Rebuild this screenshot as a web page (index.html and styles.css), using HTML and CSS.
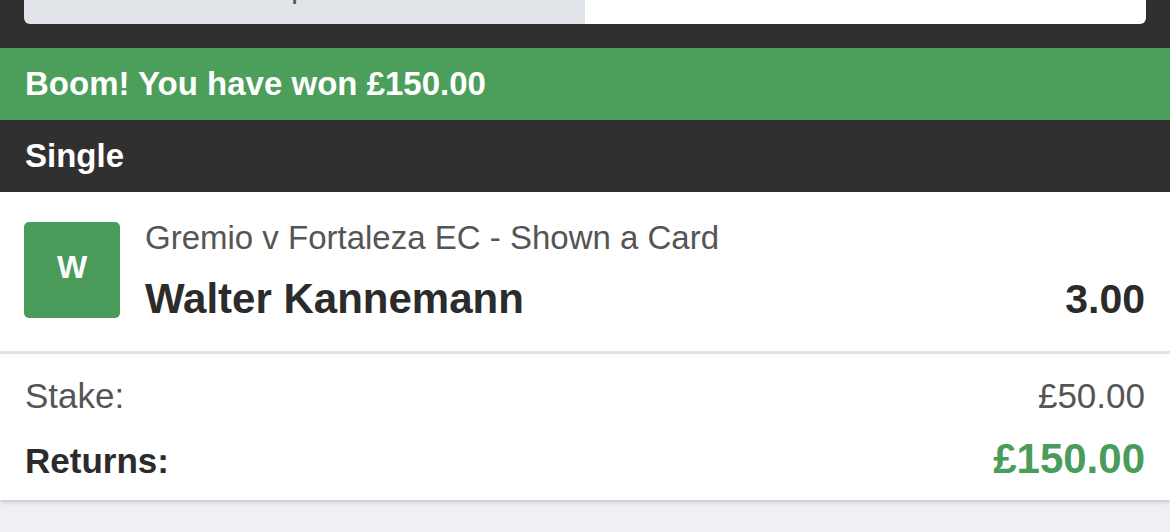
FILE: index.html
```html
<!DOCTYPE html>
<html lang="en">
<head>
<meta charset="utf-8">
<title>Bet Receipt</title>
<link rel="stylesheet" href="styles.css">
</head>
<body>
  <header class="top">
    <div class="segmented">
      <div class="seg seg-off"><span class="seg-label">Open</span></div>
      <div class="seg seg-on"><span class="seg-label">Settled</span></div>
    </div>
  </header>
  <div class="banner">Boom! You have won £150.00</div>
  <div class="bet-type">Single</div>
  <section class="card">
    <div class="selection">
      <div class="result-badge">W</div>
      <div class="sel-info">
        <div class="event">Gremio v Fortaleza EC - Shown a Card</div>
        <div class="sel-row">
          <span class="runner">Walter Kannemann</span>
          <span class="odds">3.00</span>
        </div>
      </div>
    </div>
    <div class="summary">
      <div class="sum-row">
        <span class="stake-label">Stake:</span>
        <span class="stake-value">£50.00</span>
      </div>
      <div class="sum-row">
        <span class="returns-label">Returns:</span>
        <span class="returns-value">£150.00</span>
      </div>
    </div>
  </section>
  <div class="footer-note">Bet placed 12 Aug 2019 · Receipt O/1234567</div>
</body>
</html>
```
FILE: styles.css
```css
* { box-sizing: border-box; }
html, body { margin: 0; padding: 0; }
body {
  background: #eff0f4;
  font-family: "Liberation Sans", Arial, sans-serif;
  color: #2b2b2b;
  overflow: hidden;
}
.top {
  background: #303030;
  height: 48px;
  padding: 0 24px;
}
.segmented {
  display: grid;
  grid-template-columns: 561px 1fr;
  height: 24px;
  border-radius: 0 0 6px 6px;
  overflow: hidden;
}
.seg {
  text-align: center;
  font-size: 30px;
  line-height: 30px;
  color: #555;
}
.seg-label { display: block; margin-top: -27px; }
.seg-off { background: #e0e3e7; }
.seg-on { background: #ffffff; }

.banner {
  background: #4c9e5b;
  color: #fff;
  height: 72px;
  padding: 0 25px;
  display: flex;
  align-items: center;
  font-weight: bold;
  font-size: 33px;
}
.bet-type {
  background: #303030;
  color: #fff;
  height: 72px;
  padding: 0 25px;
  display: flex;
  align-items: center;
  font-weight: bold;
  font-size: 33px;
}
.card {
  background: #fff;
  box-shadow: 0 2px 4px rgba(0,0,0,0.18);
}
.selection {
  display: flex;
  align-items: flex-start;
  gap: 25px;
  padding: 30px 25px 33px 24px;
  border-bottom: 3px solid #e3e3e6;
  height: 162px;
}
.result-badge {
  width: 96px;
  height: 96px;
  flex: 0 0 96px;
  background: #4a9b5a;
  border-radius: 5px;
  color: #fff;
  font-weight: bold;
  font-size: 32px;
  display: flex;
  align-items: center;
  justify-content: center;
  padding-bottom: 6px;
}
.sel-info {
  flex: 1;
  display: flex;
  flex-direction: column;
}
.event {
  font-size: 33px;
  line-height: 32px;
  color: #555;
}
.sel-row {
  display: flex;
  justify-content: space-between;
  align-items: baseline;
  margin-top: 23px;
  line-height: 44px;
}
.runner {
  font-weight: bold;
  font-size: 42px;
  color: #2b2b2b;
}
.odds {
  font-weight: bold;
  font-size: 41px;
  color: #2b2b2b;
}
.summary {
  padding: 22px 25px 21px;
  display: flex;
  flex-direction: column;
  gap: 23px;
  background: #fff;
}
.sum-row {
  display: flex;
  justify-content: space-between;
  align-items: baseline;
  height: 40px;
  line-height: 40px;
}
.stake-label, .stake-value {
  font-size: 35px;
  color: #555;
}
.returns-label {
  font-size: 35px;
  font-weight: bold;
  color: #2b2b2b;
}
.returns-value {
  font-size: 42px;
  font-weight: bold;
  color: #4a9c5a;
}
.footer-note {
  padding: 26px 25px 0 180px;
  font-size: 30px;
  line-height: 36px;
  color: #8a8a8e;
}
```
